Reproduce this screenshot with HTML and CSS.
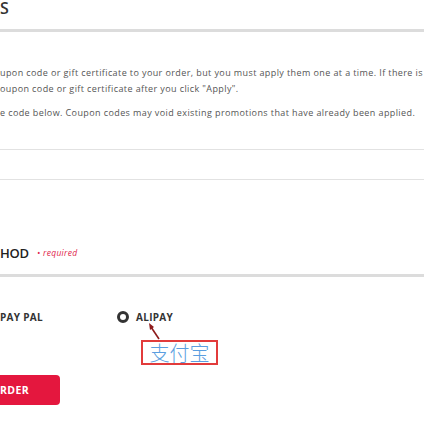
FILE: index.html
```html
<!DOCTYPE html>
<html lang="en">
<head>
  <meta charset="UTF-8" />
  <meta name="viewport" content="width=device-width, initial-scale=1.0"/>
  <title>Checkout</title>
  <link rel="stylesheet" href="styles.css">
</head>
<body>
  <div class="page">
    <div class="section-title">S</div>

    <div class="intro">
      <p>upon code or gift certificate to your order, but you must apply them one at a time. If there is a</p>
      <p>oupon code or gift certificate after you click "Apply".</p>
      <p class="note">e code below. Coupon codes may void existing promotions that have already been applied.</p>
    </div>

    <div class="coupon-box"></div>

    <div class="pay-title">
      <span class="pay-heading">HOD</span>
      <span class="required">&bull; required</span>
    </div>

    <div class="pay-options">
      <label class="option paypal">PAY PAL</label>
      <label class="option alipay"><span class="radio"></span>ALIPAY</label>

      <svg class="arrow" width="20" height="20" viewBox="0 0 20 20">
        <line x1="16" y1="18" x2="8" y2="6" stroke="#8e1b1b" stroke-width="1.6"/>
        <polygon points="6,2 11,6 7,9" fill="#8e1b1b"/>
      </svg>
      <div class="callout">支付宝</div>
    </div>

    <button class="order-btn">RDER</button>
  </div>
</body>
</html>
```

FILE: styles.css
```css
body {
  margin: 0;
  font-family: 'Open Sans', Lato, sans-serif;
  background: #fff;
  overflow: hidden;
}
.page {
  width: 424px;
  overflow: hidden;
}
.section-title {
  height: 29px;
  border-bottom: 3px solid #dcdcdc;
  font-size: 16px;
  font-weight: 600;
  color: #333;
  line-height: 16px;
}
.intro {
  padding-top: 33px;
  color: #555;
  font-size: 9px;
  letter-spacing: 0.4px;
  line-height: 16px;
  white-space: nowrap;
}
.intro p {
  margin: 0;
}
.intro .note {
  margin-top: 8px;
}
.coupon-box {
  margin-top: 28px;
  height: 29px;
  border-top: 1px solid #e2e2e2;
  border-bottom: 1px solid #e2e2e2;
}
.pay-title {
  margin-top: 65px;
  padding-bottom: 13px;
  border-bottom: 3px solid #dcdcdc;
  line-height: 16px;
  display: flex;
  align-items: center;
}
.pay-heading {
  font-size: 13px;
  font-weight: 600;
  letter-spacing: -0.3px;
  color: #222;
  width: 37px;
}
.required {
  font-size: 8.5px;
  font-style: italic;
  letter-spacing: 0.3px;
  color: #e0244a;
}
.pay-options {
  position: relative;
  margin-top: 33px;
  display: flex;
  align-items: center;
  height: 14px;
  font-size: 10px;
  font-weight: 700;
  letter-spacing: 0.3px;
  color: #333;
}
.option {
  display: flex;
  align-items: center;
}
.paypal {
  width: 117px;
}
.radio {
  width: 6px;
  height: 6px;
  border: 3px solid #333;
  border-radius: 50%;
  margin-right: 7px;
}
.arrow {
  position: absolute;
  left: 143px;
  top: 11px;
}
.callout {
  position: absolute;
  left: 141px;
  top: 30px;
  width: 73px;
  height: 21px;
  border: 2px solid #e23b3b;
  font-family: 'Noto Sans CJK SC', sans-serif;
  font-size: 20px;
  font-weight: 300;
  line-height: 21px;
  letter-spacing: 0;
  color: #5a9ee0;
  text-align: center;
}
.order-btn {
  display: block;
  margin-top: 51px;
  margin-left: -10px;
  width: 70px;
  height: 30px;
  padding: 0 0 0 10px;
  text-align: left;
  border: none;
  border-radius: 4px;
  background: #e4173e;
  color: #fff;
  font-family: 'Open Sans', sans-serif;
  font-size: 10.5px;
  font-weight: 700;
  letter-spacing: 0.4px;
}
```
